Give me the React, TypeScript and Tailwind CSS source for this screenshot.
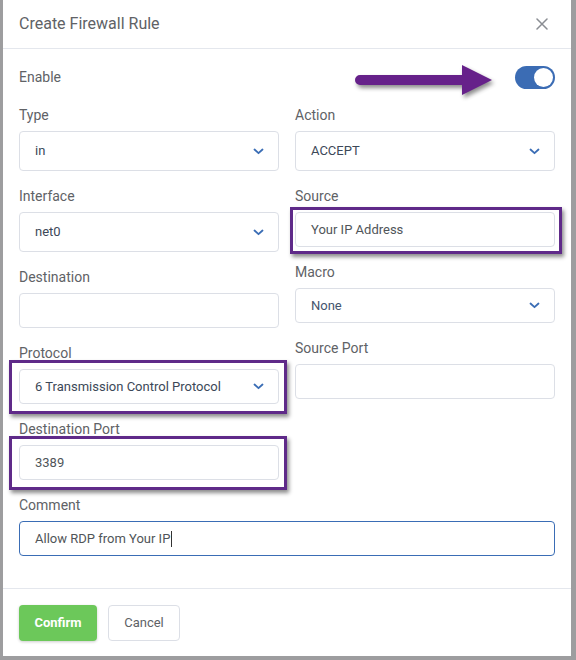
import React from "react";

const Chevron = () => (
  <svg width="11" height="7" viewBox="0 0 11 7" fill="none">
    <path d="M1.5 1.5L5.5 5.2L9.5 1.5" stroke="#3a6db5" strokeWidth="1.8" strokeLinecap="round" strokeLinejoin="round" />
  </svg>
);

function Field({
  label,
  h,
  value,
  select,
  valueClass,
  highlight,
}: {
  label: string;
  h: "40" | "35";
  value?: string;
  select?: boolean;
  valueClass?: string;
  highlight?: "source" | "left";
}) {
  return (
    <div className="mb-[15px]">
      <div className="text-[14px] leading-[20px] text-[#606266] mb-[6px]">{label}</div>
      <div className="relative">
        <div
          className={
            (h === "40" ? "h-[40px] " : "h-[35px] ") +
            "border border-[#dcdfe6] rounded-[4px] bg-white flex items-center justify-between pl-[15px] pr-[14px]"
          }
        >
          <span className={"text-[13px] " + (valueClass ?? "text-[#3c4858]")}>{value}</span>
          {select && <Chevron />}
        </div>
        {highlight === "source" && (
          <div className="absolute left-[-5px] right-[-7px] top-[-5px] bottom-[-7px] border-[3px] border-[#5f2a89] shadow-[2px_3px_4px_rgba(0,0,0,0.45)] pointer-events-none" />
        )}
        {highlight === "left" && (
          <div className="absolute left-[-10px] right-[-8px] top-[-9px] bottom-[-10px] border-[3px] border-[#5f2a89] shadow-[2px_3px_4px_rgba(0,0,0,0.45)] pointer-events-none" />
        )}
      </div>
    </div>
  );
}

export default function App() {
  return (
    <div className="w-[576px] h-[660px] bg-[#9d9d9f] overflow-hidden font-['Roboto',sans-serif]">
      <div className="ml-[3px] w-[568px] h-[656px] bg-white flex flex-col">
        <div className="h-[49px] border-b border-[#e4e7ed] flex items-center justify-between pl-[16px] pr-[23px]">
          <span className="text-[16px] text-[#606266]">Create Firewall Rule</span>
          <svg width="12" height="12" viewBox="0 0 12 12">
            <path d="M1 1L11 11M11 1L1 11" stroke="#8a8d93" strokeWidth="1.5" strokeLinecap="round" />
          </svg>
        </div>
        <div className="flex-1 px-[16px] pt-[16px]">
          <div className="h-[24px] flex items-center justify-between relative">
            <span className="text-[14px] text-[#606266]">Enable</span>
            <svg
              className="absolute left-[336px] top-[-1px] drop-shadow-[2px_3px_2px_rgba(0,0,0,0.45)]"
              width="140"
              height="32"
              viewBox="0 0 140 32"
            >
              <path d="M5 11H107V1L137 16L107 31V21H5A5 5 0 0 1 5 11Z" fill="#66218a" />
            </svg>
            <div className="w-[40px] h-[23px] rounded-full bg-[#3b6cb4] flex items-center justify-end pr-[2px]">
              <div className="w-[19px] h-[19px] rounded-full bg-white" />
            </div>
          </div>
          <div className="mt-[16px] flex gap-[16px]">
            <div className="w-[260px]">
              <Field label="Type" h="40" value="in" select />
              <Field label="Interface" h="40" value="net0" select />
              <Field label="Destination" h="35" />
              <Field label="Protocol" h="35" value="6 Transmission Control Protocol" select highlight="left" />
              <Field label="Destination Port" h="35" value="3389" valueClass="text-[#505559]" highlight="left" />
            </div>
            <div className="w-[260px]">
              <Field label="Action" h="40" value="ACCEPT" select />
              <Field label="Source" h="35" value="Your IP Address" valueClass="text-[#505559]" highlight="source" />
              <Field label="Macro" h="35" value="None" select valueClass="text-[#44556e]" />
              <Field label="Source Port" h="35" />
            </div>
          </div>
          <div>
            <div className="text-[14px] leading-[20px] text-[#606266] mb-[6px]">Comment</div>
            <div className="h-[35px] border border-[#3a6db5] rounded-[4px] flex items-center pl-[15px]">
              <span className="text-[13px] text-[#505559]">Allow RDP from Your IP</span>
              <span className="w-px h-[16px] bg-[#333] ml-[1px]" />
            </div>
          </div>
        </div>
        <div className="border-t border-[#e4e7ed] pt-[16px] pb-[15px] px-[16px] flex gap-[11px]">
          <button className="w-[78px] h-[36px] rounded-[4px] bg-[#6cc85a] text-white font-bold text-[13px] shadow-[0_1px_3px_rgba(0,0,0,0.2)]">
            Confirm
          </button>
          <button className="w-[72px] h-[36px] rounded-[4px] bg-white border border-[#dcdfe6] text-[#606266] text-[13px]">
            Cancel
          </button>
        </div>
      </div>
    </div>
  );
}
